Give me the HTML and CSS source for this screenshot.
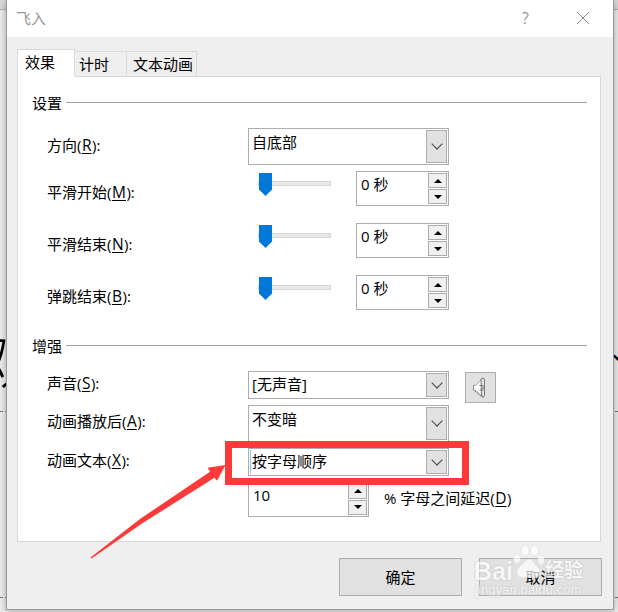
FILE: index.html
```
<!DOCTYPE html>
<html lang="zh-CN">
<head>
  <meta charset="utf-8">
  <title>飞入</title>
  <link rel="stylesheet" href="styles.css">
</head>
<body>
  <div class="slide">
    <div class="ribbon"></div>
    <div class="guide guide-top"></div>
    <div class="guide guide-bottom"></div>
    <div class="slide-text slide-left">欢</div>
    <div class="slide-text slide-right">、</div>
  </div>

  <div class="dialog">
    <div class="titlebar">
      <span class="title">飞入</span>
      <span class="help">?</span>
      <svg class="close" width="14" height="14" viewBox="0 0 14 14"><path d="M1 1L13 13M13 1L1 13" stroke="#8c8c8c" fill="none"/></svg>
    </div>

    <div class="tabs">
      <div class="tab active">效果</div>
      <div class="tab">计时</div>
      <div class="tab last">文本动画</div>
    </div>

    <div class="panel">
      <div class="group">设置</div>
      <div class="row row-direction">
        <label>方向(<u>R</u>):</label>
        <div class="select tall"><span>自底部</span><i class="drop"></i></div>
      </div>
      <div class="row row-slider">
        <label>平滑开始(<u>M</u>):</label>
        <div class="slider"><i class="thumb"></i></div>
        <div class="spin"><span>0 秒</span><div class="arrows"><i class="up"></i><i class="down"></i></div></div>
      </div>
      <div class="row row-slider">
        <label>平滑结束(<u>N</u>):</label>
        <div class="slider"><i class="thumb"></i></div>
        <div class="spin"><span>0 秒</span><div class="arrows"><i class="up"></i><i class="down"></i></div></div>
      </div>
      <div class="row row-slider row-bounce">
        <label>弹跳结束(<u>B</u>):</label>
        <div class="slider"><i class="thumb"></i></div>
        <div class="spin"><span>0 秒</span><div class="arrows"><i class="up"></i><i class="down"></i></div></div>
      </div>

      <div class="group">增强</div>
      <div class="row row-sound">
        <label>声音(<u>S</u>):</label>
        <div class="select"><span>[无声音]</span><i class="drop"></i></div>
        <div class="sound">
          <svg width="17" height="22" viewBox="0 0 17 22">
            <path d="M1.500 8.500L4 8L10.500 1.500V20L4 13.500L1.500 13z" fill="#fafafa" stroke="#aaa"/>
            <path d="M1.500 8V13.500" stroke="#888"/>
            <path d="M9 2L11.500 1L12.500 3V18L11 20.500L9.500 18z" fill="#e4e4e4" stroke="#777"/>
            <path d="M7.500 8.500H11V13H7.500M12.500 6V15" fill="none" stroke="#777"/>
            <path d="M3 14L10 20" stroke="#666" stroke-dasharray="2 1"/>
          </svg>
        </div>
      </div>
      <div class="row row-after">
        <label>动画播放后(<u>A</u>):</label>
        <div class="select tall"><span>不变暗</span><i class="drop"></i></div>
      </div>
      <div class="row row-text">
        <label>动画文本(<u>X</u>):</label>
        <div class="select focus"><span>按字母顺序</span><i class="drop"></i></div>
      </div>
      <div class="row row-delay">
        <div class="spin wide"><span>10</span><div class="arrows"><i class="up"></i><i class="down"></i></div></div>
        <label class="unit">% 字母之间延迟(<u>D</u>)</label>
      </div>
    </div>

    <div class="buttons">
      <div class="button">确定</div>
      <div class="button">取消</div>
    </div>
  </div>

  <div class="highlight"></div>
  <svg class="arrow" width="150" height="100" viewBox="0 0 150 100">
    <path d="M10.500 97.500L60 59L130 11.700L127.700 7.700L145.500 5L137 20.700L134.500 17.700L62 63.500L11.500 98.500z" fill="#fb3a39"/>
  </svg>

  <div class="watermark">
    <div class="brand">
      <span>Bai</span>
      <svg width="32" height="35" viewBox="0 0 32 35">
        <ellipse cx="4" cy="15" rx="3.500" ry="5"/>
        <ellipse cx="12" cy="6.500" rx="4" ry="5.500"/>
        <ellipse cx="21.500" cy="6.500" rx="4" ry="5.500"/>
        <ellipse cx="28" cy="16" rx="3.500" ry="5"/>
        <path d="M16 15C20 15 21 20 25 23C29 27 28 34 22 34C18 34 14 33 10 34C3 34 2 27 6 23C11 20 12 15 16 15z"/>
      </svg>
      <span class="brand-cn">经验</span>
    </div>
    <div class="site">jingyan.baidu.com</div>
  </div>
</body>
</html>
```
FILE: styles.css
```
* {
  box-sizing: border-box;
}

body {
  position: relative;
  width: 618px;
  height: 612px;
  margin: 0;
  padding-left: 6px;
  overflow: hidden;
  background-color: #f0f0f0;
  font-family: "Open Sans", "Noto Sans CJK SC", sans-serif;
  font-size: 15px;
  line-height: 20px;
  color: #000;
}

i {
  display: block;
}

/* slide behind the dialog */
.slide {
  position: absolute;
  left: 0;
  top: 0;
  width: 618px;
  height: 612px;
  overflow: hidden;
}

.ribbon {
  height: 10px;
  background-color: #dcdcdc;
  border-bottom: 1px solid #b5b5b5;
}

.guide {
  position: absolute;
  left: 0;
  width: 618px;
  border-top: 1px dashed #777;
}

.guide-top {
  top: 411px;
}

.guide-bottom {
  top: 597px;
}

.slide-text {
  position: absolute;
  line-height: 60px;
  font-weight: 300;
}

.slide-left {
  left: -20px;
  top: 330px;
  font-size: 60px;
}

.slide-right {
  left: 610px;
  top: 317px;
  font-size: 44px;
}

.dialog {
  position: relative;
  width: 608px;
  height: 610px;
  background-color: #efefef;
  border: 1px solid #999;
  border-top: none;
  box-shadow: 0 1px 8px rgba(0, 0, 0, 0.35);
}

.titlebar {
  display: flex;
  height: 37px;
  padding-left: 9px;
  background-color: #fff;
  color: #999;
}

.title {
  width: 506px;
  padding-top: 8px;
}

.help {
  width: 54px;
  padding-top: 8px;
  font-size: 16px;
}

.close {
  margin-top: 11px;
}

.tabs {
  position: relative;
  display: flex;
  align-items: flex-end;
  height: 40px;
  margin-left: 10px;
  margin-bottom: -1px;
}

.tab {
  width: 52px;
  height: 26px;
  padding: 2px 0 0 4px;
  border: 1px solid #d9d9d9;
  border-left: none;
}

.tab.active {
  width: 58px;
  height: 28px;
  padding-left: 7px;
  background-color: #fff;
  border-left: 1px solid #d9d9d9;
  border-bottom-color: #fff;
}

.tab.last {
  width: 70px;
  padding-left: 6px;
}

.panel {
  width: 584px;
  height: 466px;
  margin-left: 10px;
  padding-top: 16px;
  background-color: #fff;
  border: 1px solid #d9d9d9;
}

.group {
  display: flex;
  height: 20px;
  padding: 0 13px 0 14px;
}

.group::after {
  content: "";
  flex: 1;
  height: 1px;
  margin: 9px 0 0 4px;
  background-color: #a0a0a0;
}

.row {
  display: flex;
  padding-left: 29px;
}

.row label {
  width: 201px;
  white-space: nowrap;
}

.row-direction {
  height: 43px;
  margin-top: 15px;
}

.row-direction label {
  padding-top: 7px;
}

.row-slider {
  height: 52px;
}

.row-slider label {
  padding-top: 11px;
}

.row-bounce {
  height: 61px;
}

.row-sound {
  height: 34px;
  margin-top: 15px;
}

.row-sound label,
.row-text label {
  padding-top: 2px;
}

.row-after {
  height: 43px;
}

.row-after label {
  padding-top: 6px;
}

.row-text {
  height: 33px;
}

.row-delay {
  padding-left: 230px;
}

.row .unit {
  width: auto;
  margin-left: 15px;
  padding-top: 7px;
}

u {
  padding: 0 0.5px;
  font-size: 15.5px;
  text-underline-offset: 2px;
}

.select {
  display: flex;
  justify-content: space-between;
  width: 201px;
  height: 28px;
  padding: 1px 1px 1px 3px;
  border: 1px solid #abadb3;
}

.select span {
  padding-top: 1px;
}

.select.tall {
  height: 37px;
}

.select.tall span {
  padding-top: 2px;
}

.select.focus span {
  margin-left: -2px;
  padding-left: 1px;
  border-left: 1px solid #90c8f6;
}

.drop {
  display: flex;
  align-items: center;
  justify-content: center;
  width: 21px;
  background-color: #e1e1e1;
  border: 1px solid #adadad;
}

.drop::before {
  content: "";
  width: 7px;
  height: 7px;
  margin-top: -5px;
  border: solid #444;
  border-width: 0 1px 1px 0;
  transform: rotate(45deg);
}

.slider {
  width: 73px;
  height: 5px;
  margin: 10px 25px 0 10px;
  background-color: #e7eaea;
  border: 1px solid #d6d6d6;
}

.thumb {
  width: 13px;
  height: 23px;
  margin-top: -9px;
  background-color: #0078d7;
  clip-path: polygon(0 0, 100% 0, 100% 72%, 50% 100%, 0 72%);
}

.spin {
  display: flex;
  justify-content: space-between;
  width: 93px;
  height: 35px;
  padding: 1px 1px 1px 4px;
  border: 1px solid #abadb3;
}

.spin span {
  padding-top: 1px;
}

.spin.wide {
  width: 121px;
  height: 36px;
}

.spin.wide span {
  padding-top: 2px;
}

.arrows {
  display: flex;
  flex-direction: column;
  gap: 1px;
  width: 19px;
}

.arrows i {
  display: flex;
  flex: 1;
  align-items: center;
  justify-content: center;
  background-color: #f0f0f0;
  border: 1px solid #acacac;
}

.arrows i::before {
  content: "";
  border: 4px solid transparent;
  border-top-width: 0;
  border-bottom-color: #000;
}

.arrows .down::before {
  border-width: 4px 4px 0;
  border-color: #000 transparent;
}

.sound {
  display: flex;
  align-items: center;
  justify-content: center;
  width: 31px;
  height: 31px;
  margin: 1px 0 0 16px;
  background-color: #e1e1e1;
  border: 1px solid #adadad;
}

.buttons {
  display: flex;
  justify-content: flex-end;
  gap: 17px;
  margin-top: 16px;
  padding-right: 11px;
}

.button {
  width: 123px;
  height: 38px;
  padding-top: 8px;
  background-color: #e1e1e1;
  border: 1px solid #adadad;
  text-align: center;
}

/* red callout */
.highlight {
  position: absolute;
  left: 225px;
  top: 441px;
  width: 244px;
  height: 44px;
  border: 7px solid #fb3a39;
}

.arrow {
  position: absolute;
  left: 80px;
  top: 460px;
}

.watermark {
  position: absolute;
  left: 474px;
  top: 544px;
  color: #fff;
  opacity: 0.7;
  text-shadow: 0 0 2px #aaa;
  font-family: "Liberation Sans", "Noto Sans CJK SC", sans-serif;
}

.brand {
  display: flex;
  height: 37px;
  font-size: 25px;
  font-weight: bold;
  line-height: 54px;
}

.brand svg {
  fill: #fff;
  stroke: #ccc;
  stroke-width: 0.5;
}

.brand-cn {
  font-size: 19px;
}

.site {
  padding-left: 1px;
  font-size: 13px;
  line-height: 18px;
  letter-spacing: 0.1px;
}
```
